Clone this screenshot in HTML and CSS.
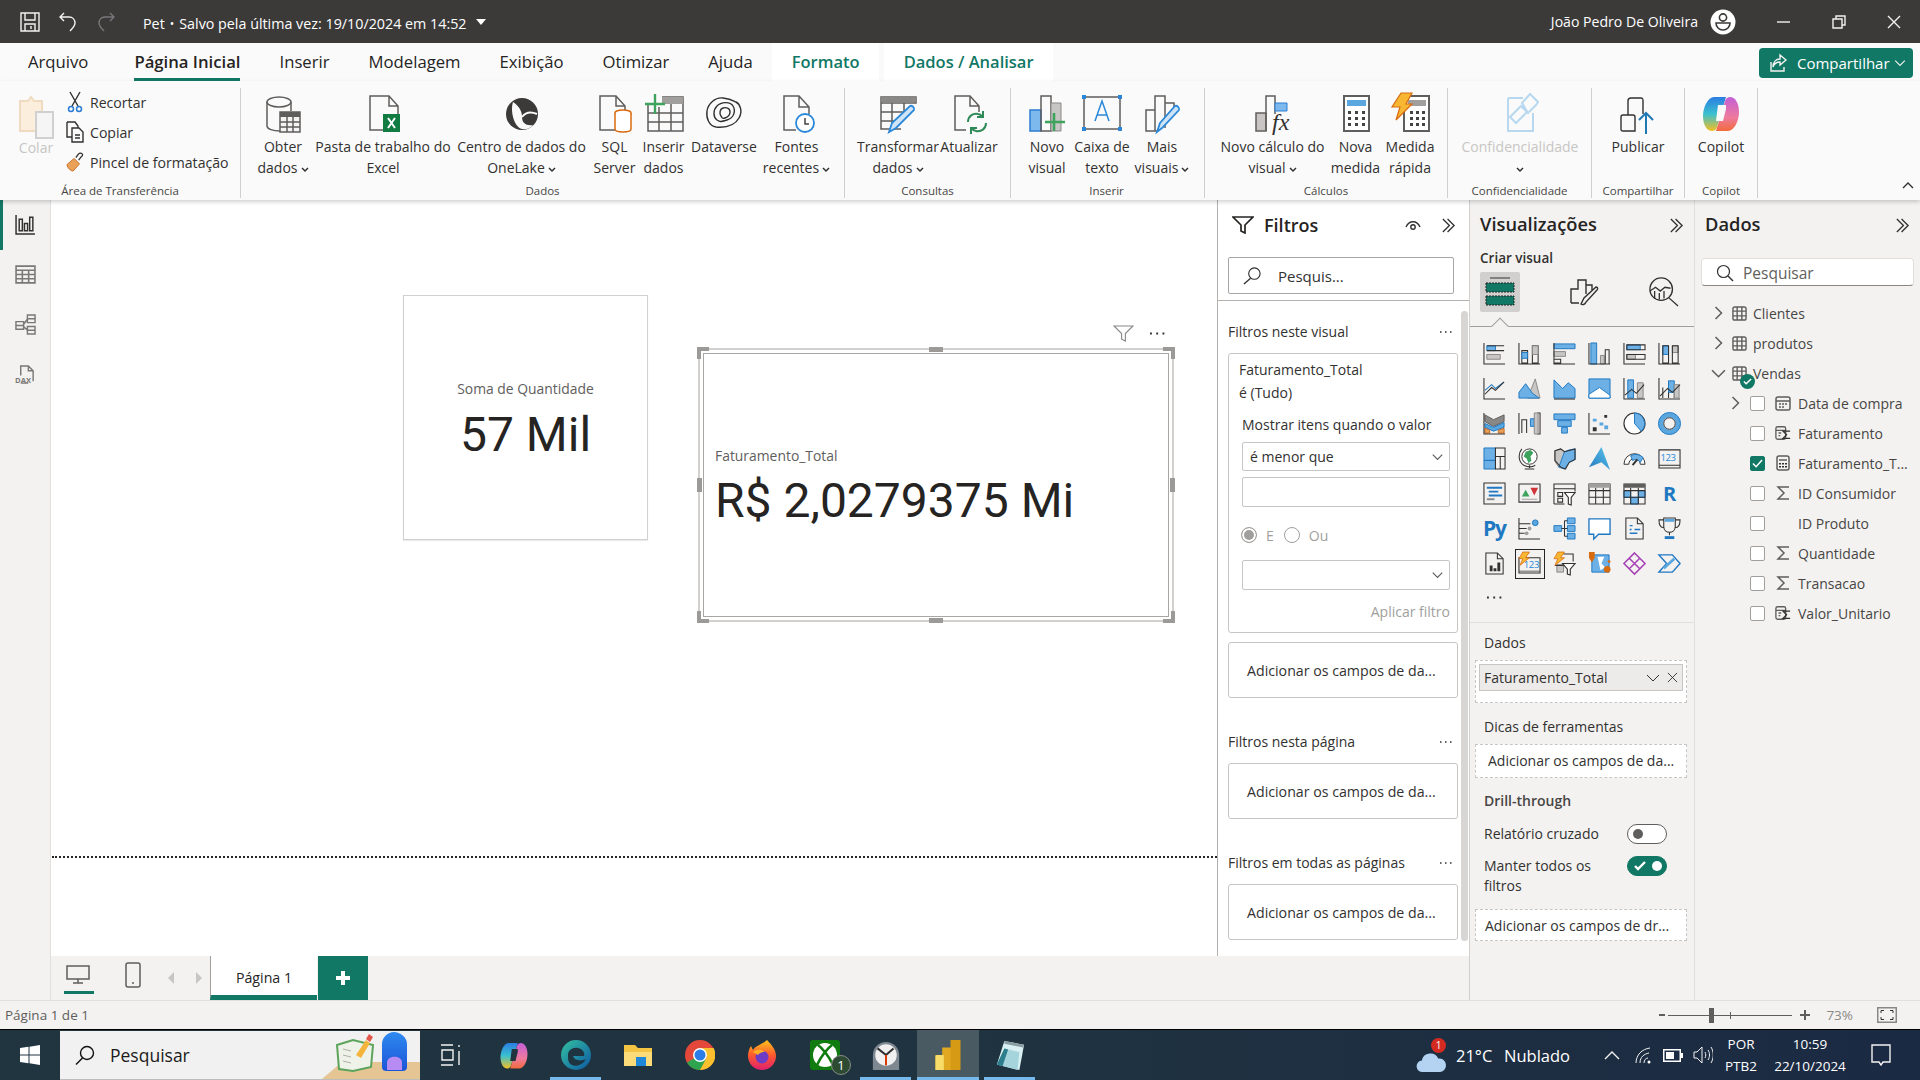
FILE: index.html
```html
<!DOCTYPE html>
<html lang="pt-BR">
<head>
    <meta charset="UTF-8">
    <title>Pet - Power BI Desktop</title>
    <link rel="stylesheet" href="styles.css">
</head>
<body>
    <svg class="defs" width="0" height="0">
        <defs>
            <symbol id="i-double" viewBox="0 0 16 16"><path class="ld" d="M2 1l7 7-7 7M7 1l7 7-7 7"/></symbol>
            <symbol id="i-right" viewBox="0 0 10 14"><path class="lm" d="M2 1l6 6-6 6"/></symbol>
            <symbol id="i-down" viewBox="0 0 14 10"><path class="lm" d="M1 2l6 6 6-6"/></symbol>
            <symbol id="i-more" viewBox="0 0 14 4"><path class="dots" d="M1 2h1.5M6 2h1.5M11 2h1.5"/></symbol>
            <symbol id="i-table" viewBox="0 0 16 16"><rect class="lm" x="1" y="1" width="14" height="14" rx="2"/><path class="lm" d="M1 5.5h14M1 10.5h14M5.5 1v14M10.5 1v14"/></symbol>
            <symbol id="i-sigma" viewBox="0 0 16 16"><path class="lm" d="M14 2H3l6 6-6 6h11"/></symbol>
            <symbol id="i-calc-sum" viewBox="0 0 18 16"><rect class="lm" x="1" y="1" width="11" height="14" rx="2"/><path class="lm" d="M1 5h11M4 8h3M4 11h2"/><path class="ld" d="M17 6H9l4 4-4 4h8" fill="#f3f2f1"/></symbol>
            <symbol id="i-caret" viewBox="0 0 8 6"><path class="car" d="M1 1l3 3 3-3"/></symbol>
        </defs>
    </svg>

    <header class="titlebar">
        <div class="title-left">
            <svg class="t-ic" viewBox="0 0 20 20"><path class="lw" d="M1 1h18v18H1zM5 1v7h10V1M5 19v-7h10v7M11 14v3"/></svg>
            <svg class="t-ic undo" viewBox="0 0 20 20"><path class="lw" d="M6 1L2 5l4 4M2 5h9c4 0 6 3 6 6s-2 5-5 8"/></svg>
            <svg class="t-ic redo" viewBox="0 0 20 20"><path class="lw dim" d="M14 1l4 4-4 4M18 5H9C5 5 3 8 3 11s2 5 5 8"/></svg>
            <span class="doc-name">Pet</span>
            <span class="doc-sep">•</span>
            <span class="doc-save">Salvo pela última vez: 19/10/2024 em 14:52</span>
            <span class="doc-arrow"></span>
        </div>
        <div class="title-right">
            <span class="user">João Pedro De Oliveira</span>
            <svg class="avatar" viewBox="0 0 26 26"><circle cx="13" cy="13" r="12.5" fill="#fff"/><circle cx="13" cy="8.5" r="3.6" fill="none" stroke="#3b3a39" stroke-width="1.6"/><path d="M6 14h14c0 4-3 7-7 7s-7-3-7-7z" fill="none" stroke="#3b3a39" stroke-width="1.6"/></svg>
            <svg class="win-btn" viewBox="0 0 14 14"><path class="lw" d="M0 7h13"/></svg>
            <svg class="win-btn" viewBox="0 0 14 14"><path class="lw" d="M1 4h9v9H1zM4 4V1h9v9h-3"/></svg>
            <svg class="win-btn" viewBox="0 0 14 14"><path class="lw" d="M1 1l12 12M13 1L1 13"/></svg>
        </div>
    </header>

    <nav class="tabs">
        <span class="tab first">Arquivo</span>
        <span class="tab active"><b>Página Inicial</b></span>
        <span class="tab">Inserir</span>
        <span class="tab">Modelagem</span>
        <span class="tab">Exibição</span>
        <span class="tab">Otimizar</span>
        <span class="tab">Ajuda</span>
        <span class="tab context">Formato</span>
        <span class="tab context">Dados / Analisar</span>
        <button class="share">
            <svg class="share-ic" viewBox="0 0 20 20"><path class="lw" d="M3 9v9h13v-4"/><path class="lw" d="M12 2l6 5-6 5V9C8 9 6 11 5 14c0-5 3-8 7-8z"/></svg>
            Compartilhar
            <svg class="share-caret" viewBox="0 0 14 10"><path class="lw" d="M1 2l6 6 6-6"/></svg>
        </button>
    </nav>

    <section class="ribbon">
        <div class="group g-clip">
            <div class="clip-row">
                <div class="paste">
                    <svg class="paste-ic" viewBox="0 0 36 38"><path d="M2 5h8l3-4 3 4h8v30H2z" fill="#fbeedd" stroke="#efdcc0" stroke-width="2"/><rect x="18" y="16" width="17" height="26" fill="#f5f5f5" stroke="#d0d0d0" stroke-width="2"/></svg>
                    <span class="paste-label">Colar</span>
                </div>
                <div class="clip-list">
                    <div class="clip-item">
                        <svg class="clip-ic" viewBox="0 0 18 22"><path class="ld" d="M4 1l8 14M14 1L6 15"/><circle cx="5" cy="18" r="2.5" fill="none" stroke="#2b7cd3" stroke-width="1.5"/><circle cx="13" cy="18" r="2.5" fill="none" stroke="#2b7cd3" stroke-width="1.5"/></svg>
                        Recortar
                    </div>
                    <div class="clip-item">
                        <svg class="clip-ic" viewBox="0 0 18 22"><path class="ld" d="M1 1h8l3 4v2M1 1v15h5"/><path class="ld" d="M6 7h7l4 4v10H6zM9 14h5M9 17h5"/></svg>
                        Copiar
                    </div>
                    <div class="clip-item">
                        <svg class="clip-ic" viewBox="0 0 20 22"><path d="M1 14L9 7l6 6-7 8c-3 0-6-3-7-7z" fill="#e8a25a" stroke="#c9661c" stroke-width="1"/><path class="ld" d="M11 6l3-4c1-1 3-1 4 0s0 3-1 3l-3 4"/></svg>
                        Pincel de formatação
                    </div>
                </div>
            </div>
            <div class="group-name">Área de Transferência</div>
        </div>

        <div class="group g-data">
            <div class="rb-row">
                <div class="rb w60">
                    <svg class="rb-ic" viewBox="0 0 40 40"><ellipse class="lm" cx="16" cy="9" rx="12" ry="5"/><path class="lm" d="M4 9v24c0 3 6 5 13 5M28 9v9"/><rect x="17" y="19" width="20" height="20" fill="#f4f4f4" stroke="#605e5c" stroke-width="1.5"/><path d="M17 19h20v5H17z" fill="#605e5c"/><path class="lm" d="M24 24v15M30 24v15M17 29h20M17 34h20"/></svg>
                    <span class="rb-t">Obter<br>dados<svg class="caret"><use href="#i-caret"/></svg></span>
                </div>
                <div class="rb w140">
                    <svg class="rb-ic" viewBox="0 0 40 40"><path class="lm" d="M21 37H7V3h19l9 10v8M26 3v10h9"/><rect x="20" y="21" width="17" height="18" fill="#107c41"/><path d="M25 25l7 10M32 25l-7 10" stroke="#fff" stroke-width="2" fill="none"/></svg>
                    <span class="rb-t">Pasta de trabalho do<br>Excel</span>
                </div>
                <div class="rb w137">
                    <svg class="rb-ic" viewBox="0 0 40 40"><circle cx="20" cy="21" r="16" fill="#3b3a39"/><path d="M11 9c6 4 9 9 9 15s4 9 11 8c-2 3-7 5-11 4C12 34 8 18 11 9z" fill="#fafafa"/><path d="M20 24c3-4 8-6 15-3" fill="none" stroke="#fafafa" stroke-width="2"/></svg>
                    <span class="rb-t">Centro de dados do<br>OneLake<svg class="caret"><use href="#i-caret"/></svg></span>
                </div>
                <div class="rb w49">
                    <svg class="rb-ic" viewBox="0 0 40 40"><path class="lm" d="M20 37H5V3h16l9 10v5M21 3v10h9"/><ellipse cx="28" cy="20" rx="8" ry="3" fill="#fff" stroke="#d86b10" stroke-width="1.5"/><path d="M20 20v16c0 2 4 3 8 3s8-1 8-3V20" fill="#fff" stroke="#d86b10" stroke-width="1.5"/></svg>
                    <span class="rb-t">SQL<br>Server</span>
                </div>
                <div class="rb w49">
                    <svg class="rb-ic" viewBox="0 0 40 40"><path class="lm" d="M4 10v28h35V4H18M4 20h35M4 29h35M15 14v24M27 4v34"/><path d="M18 4h21v7H18z" fill="#a19f9d"/><path d="M11 1v20M1 11h20" stroke="#3da35d" stroke-width="2.4" fill="none"/></svg>
                    <span class="rb-t">Inserir<br>dados</span>
                </div>
                <div class="rb w72">
                    <svg class="rb-ic" viewBox="0 0 40 40"><path class="ld" d="M12 34C5 33 2 25 3 18S11 4 19 5s9 2 13 4 7 9 3 16-12 10-23 9zM13 27c-4-3-4-10 0-14s13-5 16 0 1 12-6 14-7 2-10 0zM17 23c-2-3-1-7 2-8s7 0 7 4-2 5-5 6-3 0-4-2z"/></svg>
                    <span class="rb-t">Dataverse</span>
                </div>
                <div class="rb w73">
                    <svg class="rb-ic" viewBox="0 0 40 40"><path class="lm" d="M19 37H7V3h15l10 11v7M22 3v11h10"/><circle cx="28" cy="30" r="9" fill="#fff" stroke="#2b88d8" stroke-width="1.8"/><path d="M28 25v6h4" fill="none" stroke="#444" stroke-width="1.5"/></svg>
                    <span class="rb-t">Fontes<br>recentes<svg class="caret"><use href="#i-caret"/></svg></span>
                </div>
            </div>
            <div class="group-name">Dados</div>
        </div>

        <div class="group g-query">
            <div class="rb-row">
                <div class="rb w82">
                    <svg class="rb-ic" viewBox="0 0 40 40"><path class="lm" d="M3 4h35v6H3zM3 10v26h20M3 19h26M3 28h18M14 10v26M26 10v10"/><path d="M3 4h35v5H3z" fill="#8a8886"/><path d="M11 39l3-9 18-17c2-1 5 2 4 4L18 35z" fill="#cfe5f7" stroke="#2b88d8" stroke-width="1.8"/></svg>
                    <span class="rb-t">Transformar<br>dados<svg class="caret"><use href="#i-caret"/></svg></span>
                </div>
                <div class="rb w60">
                    <svg class="rb-ic" viewBox="0 0 40 40"><path class="lm" d="M17 37H6V3h15l9 10v6M21 3v10h9"/><path d="M19 29c0-6 5-9 10-8 2 0 3 1 5 3M34 18v6h-6M37 30c0 6-5 9-10 8-2 0-3-1-5-3M22 41v-6h6" fill="none" stroke="#2e8b57" stroke-width="2"/></svg>
                    <span class="rb-t">Atualizar</span>
                </div>
            </div>
            <div class="group-name">Consultas</div>
        </div>

        <div class="group g-insert">
            <div class="rb-row">
                <div class="rb w52">
                    <svg class="rb-ic" viewBox="0 0 40 40"><rect x="3" y="17" width="11" height="21" fill="#7db9ec" stroke="#2b7cd3" stroke-width="1.5"/><path class="lm" d="M14 38V3h10v35z"/><path d="M24 10h10v28H24z" fill="#c8c6c4" stroke="#8a8886"/><path d="M27 20v18M18 29h20" stroke="#3da35d" stroke-width="2.6" fill="none"/></svg>
                    <span class="rb-t">Novo<br>visual</span>
                </div>
                <div class="rb w58">
                    <svg class="rb-ic" viewBox="0 0 40 40"><rect class="lm" x="2" y="4" width="36" height="32"/><path d="M13 28l7-20 7 20M15 22h10" fill="none" stroke="#2b88d8" stroke-width="1.5"/><path d="M0 2h4v4H0zM36 2h4v4h-4zM0 34h4v4H0zM36 34h4v4h-4z" fill="#2b88d8"/></svg>
                    <span class="rb-t">Caixa de<br>texto</span>
                </div>
                <div class="rb w62">
                    <svg class="rb-ic" viewBox="0 0 40 40"><path class="lm" d="M4 38V17h9v21zM13 38V3h10v32M23 10h9v12M4 38h12"/><path d="M15 39l3-9 15-17c2-1 5 2 4 4L20 35z" fill="#cfe5f7" stroke="#2b88d8" stroke-width="1.8"/></svg>
                    <span class="rb-t">Mais<br>visuais<svg class="caret"><use href="#i-caret"/></svg></span>
                </div>
            </div>
            <div class="group-name">Inserir</div>
        </div>

        <div class="group g-calc">
            <div class="rb-row">
                <div class="rb w111">
                    <svg class="rb-ic" viewBox="0 0 40 40"><path d="M3 20h10v18H3z" fill="#c8c6c4" stroke="#605e5c" stroke-width="1.5"/><path class="lm" d="M13 38V3h9v18"/><path d="M22 10h12v8H22z" fill="#7db9ec" stroke="#2b7cd3"/><text class="fx" x="19" y="37">fx</text></svg>
                    <span class="rb-t">Novo cálculo do<br>visual<svg class="caret"><use href="#i-caret"/></svg></span>
                </div>
                <div class="rb w55">
                    <svg class="rb-ic" viewBox="0 0 40 40"><rect x="8" y="3" width="25" height="35" fill="#fff" stroke="#605e5c" stroke-width="2"/><rect x="11" y="7" width="19" height="6" fill="#5aa7e0"/><path d="M12 18h3v3h-3zM19 18h3v3h-3zM26 18h3v3h-3zM12 24h3v3h-3zM19 24h3v3h-3zM26 24h3v3h-3zM12 30h3v3h-3zM19 30h3v3h-3zM26 30h3v3h-3z" fill="#444"/></svg>
                    <span class="rb-t">Nova<br>medida</span>
                </div>
                <div class="rb w54">
                    <svg class="rb-ic" viewBox="0 0 40 40"><path d="M14 3h25v35H14z" fill="#fff" stroke="#605e5c" stroke-width="2"/><path d="M18 7h18v6H18z" fill="#a19f9d"/><path d="M20 18h3v3h-3zM26 18h3v3h-3zM32 18h3v3h-3zM20 24h3v3h-3zM26 24h3v3h-3zM32 24h3v3h-3zM20 30h3v3h-3zM26 30h3v3h-3zM32 30h3v3h-3z" fill="#444"/><path d="M11 0h11l-6 11h6L6 27l4-13H2z" fill="#f7b733" stroke="#d86b10" stroke-width="1.2"/></svg>
                    <span class="rb-t">Medida<br>rápida</span>
                </div>
            </div>
            <div class="group-name">Cálculos</div>
        </div>

        <div class="group g-conf">
            <div class="rb-row">
                <div class="rb w120 off">
                    <svg class="rb-ic" viewBox="0 0 40 40"><path d="M8 5h15M8 5v33h25V20" fill="none" stroke="#b7d8ef" stroke-width="2"/><path d="M22 10l8-9 8 8-2 3-8 8zM10 24l11-11 6 6-11 11z" fill="none" stroke="#b7d8ef" stroke-width="2"/></svg>
                    <span class="rb-t">Confidencialidade<br><svg class="caret"><use href="#i-caret"/></svg></span>
                </div>
            </div>
            <div class="group-name">Confidencialidade</div>
        </div>

        <div class="group g-share">
            <div class="rb-row">
                <div class="rb w76">
                    <svg class="rb-ic" viewBox="0 0 40 40"><path class="ld" d="M5 38c-2 0-2-1-2-2V24c0-2 1-2 2-2h5V8c0-2 1-3 3-3h10c2 0 2 1 2 3v13M10 22h5c1 0 2 1 2 2v14H5"/><path d="M28 41V20M21 27l7-7 7 7" fill="none" stroke="#2078b4" stroke-width="2"/></svg>
                    <span class="rb-t">Publicar</span>
                </div>
            </div>
            <div class="group-name">Compartilhar</div>
        </div>

        <div class="group g-copilot">
            <div class="rb-row">
                <div class="rb w60">
                    <svg class="rb-ic" viewBox="0 0 40 40"><defs><linearGradient id="cp1" x1="0" y1="0" x2="0" y2="1"><stop offset="0" stop-color="#2a7de1"/><stop offset=".5" stop-color="#3ac0d0"/><stop offset="1" stop-color="#f4c020"/></linearGradient><linearGradient id="cp2" x1="0" y1="0" x2="0" y2="1"><stop offset="0" stop-color="#c35fd6"/><stop offset=".6" stop-color="#ee7a9d"/><stop offset="1" stop-color="#f26b3c"/></linearGradient></defs><path d="M13 4h12l-9 30c-1 3-3 4-5 4-5 0-9-6-9-15C2 14 7 4 13 4z" fill="url(#cp1)"/><path d="M27 38H15l9-30c1-3 3-4 5-4 5 0 9 6 9 15 0 9-5 19-11 19z" fill="url(#cp2)"/><path d="M17 12h8v4l-3 12h-7z" fill="#fafafa"/></svg>
                    <span class="rb-t">Copilot</span>
                </div>
            </div>
            <div class="group-name">Copilot</div>
        </div>
        <svg class="collapse" viewBox="0 0 12 8"><path class="ld" d="M1 7l5-5 5 5"/></svg>
    </section>

    <main class="main">
        <aside class="rail">
            <div class="rail-item current"><svg class="rail-ic" viewBox="0 0 20 20"><path d="M1 1v18h18M4 5h3v11H4zM9 9h3v7H9zM14 3h3v13h-3z" fill="none" stroke="#323130" stroke-width="1.4"/></svg></div>
            <div class="rail-item"><svg class="rail-ic" viewBox="0 0 20 20"><path class="lg" d="M1 2h18v16H1zM1 6h18M1 10h18M1 14h18M7 6v12M13 6v12"/></svg></div>
            <div class="rail-item"><svg class="rail-ic" viewBox="0 0 22 22"><path class="lg" d="M1 8h8v8H1zM1 12h8M13 1h8v8h-8zM13 5h8M13 13h8v8h-8zM13 17h8M9 11l4-6M9 13l4 4"/></svg></div>
            <div class="rail-item"><svg class="rail-ic" viewBox="0 0 22 22"><path class="lg" d="M6 12V2h8l5 5v11M14 2v5h5M6 20h8"/><text class="dax" x="0" y="20">DAX</text></svg></div>
        </aside>

        <div class="center">
            <div class="work">
                <div class="canvas">
                    <div class="visual visual-a">
                        <div class="card-label">Soma de Quantidade</div>
                        <div class="card-value">57 Mil</div>
                    </div>
                    <div class="visual-tools">
                        <svg class="tool-funnel" viewBox="0 0 22 18"><path d="M1 1h20l-8 8v8l-4-2V9z" fill="none" stroke="#8a8886" stroke-width="1.2"/></svg>
                        <svg class="tool-more" viewBox="0 0 14 4"><use href="#i-more"/></svg>
                    </div>
                    <div class="visual visual-b">
                        <div class="frame"></div>
                        <i class="corner c-tl"></i><i class="corner c-tr"></i><i class="corner c-bl"></i><i class="corner c-br"></i>
                        <i class="edge e-t"></i><i class="edge e-b"></i><i class="edge e-l"></i><i class="edge e-r"></i>
                        <div class="card-label">Faturamento_Total</div>
                        <div class="card-value">R$ 2,0279375 Mi</div>
                    </div>
                    <div class="page-line"></div>
                </div>

                <aside class="filters">
                    <div class="pane-head f-head">
                        <svg class="f-funnel" viewBox="0 0 22 18"><path d="M1 1h20l-8 8v8l-4-2V9z" fill="none" stroke="#252423" stroke-width="1.7"/></svg>
                        <span class="f-title">Filtros</span>
                        <svg class="f-eye" viewBox="0 0 16 10"><path class="ld" d="M1 7c3-7 11-7 14 0"/><circle cx="8" cy="7" r="2.2" fill="none" stroke="#323130" stroke-width="1.4"/></svg>
                        <svg class="chev2"><use href="#i-double"/></svg>
                    </div>
                    <div class="f-search">
                        <svg class="f-lens" viewBox="0 0 20 20"><circle cx="12" cy="8" r="6" fill="none" stroke="#323130" stroke-width="1.2"/><path class="ld" d="M8 13l-7 6"/></svg>
                        Pesquis...
                    </div>
                    <div class="f-body">
                        <div class="f-section first-section"><span>Filtros neste visual</span><svg class="f-more"><use href="#i-more"/></svg></div>
                        <div class="f-card big">
                            <div class="f-line">Faturamento_Total</div>
                            <div class="f-line">é (Tudo)</div>
                            <div class="f-show">Mostrar itens quando o valor</div>
                            <div class="f-select">é menor que<svg class="sel-chev"><use href="#i-down"/></svg></div>
                            <div class="f-input"></div>
                            <div class="f-radios">
                                <span class="radio on"></span><span class="r-text">E</span>
                                <span class="radio"></span><span class="r-text">Ou</span>
                            </div>
                            <div class="f-select second"><svg class="sel-chev"><use href="#i-down"/></svg></div>
                            <div class="f-apply">Aplicar filtro</div>
                        </div>
                        <div class="f-card add first-add">Adicionar os campos de da...</div>
                        <div class="f-section"><span>Filtros nesta página</span><svg class="f-more"><use href="#i-more"/></svg></div>
                        <div class="f-card add">Adicionar os campos de da...</div>
                        <div class="f-section"><span>Filtros em todas as páginas</span><svg class="f-more"><use href="#i-more"/></svg></div>
                        <div class="f-card add">Adicionar os campos de da...</div>
                    </div>
                    <div class="f-scroll"></div>
                </aside>
            </div>

            <div class="strip">
                <div class="view-btn">
                    <svg class="desk" viewBox="0 0 24 19"><path class="lm" d="M1 1h22v13H1zM12 14v4M7 18h10"/></svg>
                </div>
                <svg class="phone" viewBox="0 0 16 26"><rect class="lm" x="1" y="1" width="14" height="24" rx="2"/><path class="lm" d="M7 21h2"/></svg>
                <span class="page-arrow left"></span>
                <span class="page-arrow right"></span>
                <div class="page-tab">Página 1</div>
                <div class="page-add"></div>
            </div>
        </div>

        <aside class="viz">
            <div class="pane-head">
                <span class="pane-title">Visualizações</span>
                <svg class="chev2"><use href="#i-double"/></svg>
            </div>
            <div class="viz-sub">Criar visual</div>
            <div class="viz-tabs">
                <div class="viz-tab on">
                    <svg viewBox="0 0 30 30" class="vt-ic"><path d="M5 1h20" stroke="#323130" fill="none"/><rect x="1" y="6" width="28" height="9" fill="#117865" stroke="#252423" stroke-dasharray="2 1"/><rect x="1" y="19" width="28" height="9" fill="#117865" stroke="#252423" stroke-dasharray="2 1"/></svg>
                </div>
                <svg viewBox="0 0 30 30" class="vt-ic brush"><path class="ld" d="M2 26V12h7V3h8v14M17 8h6v5M2 26h8"/><path class="ld" d="M12 27l3-6 12-11c2 0 2 2 1 3L17 25c-1 3-4 3-5 2z"/></svg>
                <svg viewBox="0 0 32 32" class="vt-ic lens"><circle class="ld" cx="13" cy="13" r="12"/><path class="ld" d="M21 22l10 9M1 15l6-4 5 4 5-4 6 1M6 15v8M11 17v7M16 15v8"/></svg>
            </div>
            <div class="viz-grid">
                <svg class="vi" viewBox="0 0 24 24"><path class="bx" d="M4 4h9v5H4z"/><path class="gx" d="M4 13h14v5H4z"/><path class="ax" d="M1 1v22h22M4 9h18M4 4h18"/></svg>
                <svg class="vi" viewBox="0 0 24 24"><path class="ax" d="M1 1v22h22M4 9v13h6V9zM15 4v18h6V4z"/><path class="bx" d="M4 11h6v6H4z"/><path class="gx" d="M15 4h6v9h-6z"/></svg>
                <svg class="vi" viewBox="0 0 24 24"><path class="bx" d="M1 2h22v5H1z"/><path class="gx" d="M1 10h12v5H1z"/><path class="ax" d="M1 1v22h22M1 18h7v4H1z"/></svg>
                <svg class="vi" viewBox="0 0 24 24"><path class="bx" d="M3 1h6v22H3z"/><path class="gx" d="M13 14h4v9h-4z"/><path class="ax" d="M1 1v22h22M18 8h4v15h-4z"/></svg>
                <svg class="vi" viewBox="0 0 24 24"><path class="bx" d="M4 3h14v5H4z"/><path class="gx" d="M4 13h9v5H4z"/><path class="ax" d="M1 1v22h22M4 3h19v5H4zM4 13h19v5H4z"/></svg>
                <svg class="vi" viewBox="0 0 24 24"><path class="bx" d="M5 4h6v9H5z"/><path class="gx" d="M15 4h6v7h-6z"/><path class="ax" d="M1 1v22h22M5 4v18h6V4zM15 4v18h6V4z"/></svg>

                <svg class="vi" viewBox="0 0 24 24"><path class="ax" d="M1 1v22h22"/><path class="bl" d="M2 14l7-6 4 4 8-6"/><path class="ax" d="M2 18l7-7 4 3 9-9"/></svg>
                <svg class="vi" viewBox="0 0 24 24"><path class="gx" d="M10 22L18 2l5 20z"/><path class="bx" d="M1 22v-6l7-9 7 10 7 5z"/></svg>
                <svg class="vi" viewBox="0 0 24 24"><path class="bx" d="M1 3l9 9 6-6 7 6v10H1z"/><path class="ax" d="M1 23h22"/></svg>
                <svg class="vi" viewBox="0 0 24 24"><path class="bx" d="M1 2h22v20H1z"/><path d="M1 22v-4l11-7 11 8v3z" fill="#fff" stroke="#1f78c1"/></svg>
                <svg class="vi" viewBox="0 0 24 24"><path class="bx" d="M5 3h6v19H5z"/><path class="gx" d="M15 6h6v16h-6z"/><path class="ax" d="M1 1v22h22M2 19l7-6 5 4 8-9"/></svg>
                <svg class="vi" viewBox="0 0 24 24"><path class="ax" d="M1 1v22h22M5 11v11M11 4v18M17 8v14"/><path class="bx" d="M11 4h6v12h-6z"/><path class="gx" d="M17 8h5v14h-5z"/><path class="ax" d="M2 20l8-8 5 4 8-8"/></svg>

                <svg class="vi" viewBox="0 0 24 24"><path d="M2 3l9 5 11-5v7l-11 5-9-5z" fill="#8a8886" stroke="#605e5c"/><path d="M2 12l9 4 11-5v5l-11 4-9-4z" fill="#5aa7e0" stroke="#1f78c1"/><path d="M2 17l5 2v3H2zM16 19l6-2v5h-6z" fill="#e8a25a" stroke="#c9661c"/><path class="ax" d="M1 1v22h22"/></svg>
                <svg class="vi" viewBox="0 0 24 24"><path class="ax" d="M1 1v22M4 22V8h5v14M20 1h3v22h-3"/><path class="bx" d="M13 7h4v8h-4z"/><path class="gx" d="M17 1h4v22h-4z"/></svg>
                <svg class="vi" viewBox="0 0 24 24"><path class="bx" d="M1 2h22v6H1zM5 9h14v6H5z"/><path class="bx" d="M9 16h6v6H9z"/></svg>
                <svg class="vi" viewBox="0 0 24 24"><path class="ax" d="M1 1v22h22"/><path d="M5 7h4v3H5zM12 11h4v3h-4z" fill="#5aa7e0"/><path d="M17 3h3v3h-3zM5 16h4v4H5z" fill="#323130"/><path d="M17 14h4v4h-4z" fill="#5aa7e0"/></svg>
                <svg class="vi" viewBox="0 0 24 24"><circle cx="12" cy="12" r="11" fill="#fff" stroke="#323130" stroke-width="1.2"/><path class="bx" d="M12 1a11 11 0 0 1 7 19l-7-8z"/></svg>
                <svg class="vi" viewBox="0 0 24 24"><circle cx="12" cy="12" r="9" fill="none" stroke="#5aa7e0" stroke-width="5"/><circle cx="12" cy="12" r="6" fill="none" stroke="#323130" stroke-width="1"/><circle cx="12" cy="12" r="11.5" fill="none" stroke="#1f78c1" stroke-width="1"/></svg>

                <svg class="vi" viewBox="0 0 24 24"><path class="bx" d="M1 1h12v13H1zM1 14h12v9H1z"/><path class="ax" d="M13 1h10v22H13zM13 10h10M18 10v13"/></svg>
                <svg class="vi" viewBox="0 0 24 24"><circle cx="12" cy="10" r="8" fill="#fff" stroke="#323130"/><path d="M8 5l5-2 3 3-3 4 1 4-3 3-2-5-3-2z" fill="#3da35d"/><path class="ax" d="M4 2c-4 5-4 13 2 17 4 2 9 2 12 0M12 19v3M7 23h10"/></svg>
                <svg class="vi" viewBox="0 0 24 24"><path class="gx" d="M2 4l6-2 4 3v9l-6 7-4-6z"/><path class="bx" d="M12 5l5-2 6-1v11l-6 3-5 7-6-2z"/><path class="ax" d="M2 4l6-2 4 3 11-3v11l-6 3-4 7-5-2-6-7z"/></svg>
                <svg class="vi" viewBox="0 0 24 24"><defs><linearGradient id="az" x1="0" y1="1" x2="1" y2="0"><stop offset="0" stop-color="#1f78c1"/><stop offset="1" stop-color="#5fc5ea"/></linearGradient></defs><path d="M14 0l9 24-9-8L1 21z" fill="url(#az)"/></svg>
                <svg class="vi" viewBox="0 0 24 24"><path d="M1 18a11 11 0 0 1 22 0h-5a6 6 0 0 0-12 0z" fill="#fff" stroke="#323130"/><path class="bx" d="M8 9a11 11 0 0 1 13 2l-3 5a6 6 0 0 0-8-2z"/><path d="M10 19l5-6" stroke="#323130" stroke-width="2"/></svg>
                <svg class="vi" viewBox="0 0 24 24"><path class="ax" d="M1 3h22v19H1zM1 19h22"/><text class="n123" x="2.5" y="15">123</text></svg>

                <svg class="vi" viewBox="0 0 24 24"><path class="ax" d="M1 1h22v22H1z"/><path d="M4 6h16M6 10h10M6 14h14" stroke="#1f78c1" stroke-width="2" fill="none"/><path d="M4 18h8" stroke="#8a8886" stroke-width="2"/></svg>
                <svg class="vi" viewBox="0 0 24 24"><path class="ax" d="M1 2h22v19H1z"/><path d="M4 18h16" stroke="#a19f9d"/><path d="M4 15l4-7 4 7z" fill="#3da35d"/><path d="M13 6h8l-4 8z" fill="#d13438"/></svg>
                <svg class="vi" viewBox="0 0 24 24"><path class="ax" d="M1 23V2h22v8M1 7h22M5 11h5v4H5zM5 17h5v4H5zM1 23h11"/><path d="M12 11h11l-4 5v8l-3-1v-7z" fill="#fff" stroke="#323130" stroke-width="1.2"/></svg>
                <svg class="vi" viewBox="0 0 24 24"><path class="ax" d="M1 2h22v21H1zM1 9h22M1 16h22M8 6v17M16 6v17"/><path d="M1 2h22v4H1z" fill="#a19f9d"/></svg>
                <svg class="vi" viewBox="0 0 24 24"><path class="bx" d="M1 9h7v7H1zM8 16h8v7H8zM16 9h7v7h-7z"/><path class="ax" d="M1 2h22v21H1zM1 9h22M1 16h22M8 6v17M16 6v17"/><path d="M1 2h22v4H1z" fill="#605e5c"/></svg>
                <span class="vi-text r">R</span>

                <span class="vi-text py">Py</span>
                <svg class="vi" viewBox="0 0 24 24"><path class="ax" d="M1 1v22h22M1 7h12M1 12h8M1 17h6"/><circle cx="18" cy="6" r="3" fill="#5aa7e0" stroke="#1f78c1"/><circle cx="12" cy="12" r="2" fill="#a19f9d"/><circle cx="9" cy="17" r="2" fill="#a19f9d"/></svg>
                <svg class="vi" viewBox="0 0 24 24"><path class="bx" d="M1 9h8v6H1zM15 1h8v6h-8zM15 9h8v6h-8zM15 17h8v6h-8z"/><path class="ax" d="M9 12h6M12 4v16M12 4h3M12 20h3"/></svg>
                <svg class="vi" viewBox="0 0 24 24"><path d="M1 2h22v16H11l-5 5v-5H1z" fill="#fff" stroke="#1f78c1" stroke-width="1.4"/></svg>
                <svg class="vi" viewBox="0 0 24 24"><path class="ax" d="M3 1h12l6 6v16H3zM15 1v6h6"/><path d="M7 9h3M7 13h2M12 13h6M7 17h8" stroke="#1f78c1" stroke-width="1.4" fill="none"/></svg>
                <svg class="vi" viewBox="0 0 24 24"><path class="ax" d="M6 1h12v9c0 4-3 6-6 6s-6-2-6-6zM6 3H1c0 5 2 8 5 8M18 3h5c0 5-2 8-5 8M12 16v3"/><path d="M7 2h10v3H7z" fill="#5aa7e0"/><path d="M7 20h10v3H7z" fill="#1f78c1"/></svg>

                <svg class="vi" viewBox="0 0 24 24"><path class="ax" d="M3 1h12l6 6v16H3zM15 1v6h6"/><path d="M7 14h3v6H7zM11 17h3v3h-3zM15 11h3v9h-3z" fill="#323130"/></svg>
                <div class="vi-sel"><svg class="vi" viewBox="0 0 24 24"><path class="ax" d="M1 6h22v16H1z"/><path d="M1 20h22" stroke="#605e5c"/><text class="n123" x="6" y="17">123</text><path d="M5 0h7L8 6h4L2 14l3-7H1z" fill="#f7b733" stroke="#d86b10" stroke-width=".8"/></svg></div>
                <svg class="vi" viewBox="0 0 24 24"><path class="gx" d="M4 13h7v8H4z"/><path class="ax" d="M11 2h10v8M2 14h9"/><path d="M10 12h13l-5 6v6l-3-1v-5z" fill="#fff" stroke="#323130" stroke-width="1.2"/><path d="M5 0h7L8 6h4L2 14l3-7H1z" fill="#f7b733" stroke="#d86b10" stroke-width=".8"/></svg>
                <svg class="vi" viewBox="0 0 24 24"><path class="bx" d="M4 3h18v18H4z"/><path d="M10 5l7 0-3 7 4 4-5 3z" fill="#fff"/><path d="M1 0h6v6l-3 5-3-5z" fill="#d86b10"/><circle cx="20" cy="18" r="3.5" fill="#d86b10"/><circle cx="22" cy="10" r="1.5" fill="#d86b10"/></svg>
                <svg class="vi" viewBox="0 0 24 24"><path d="M12 1l11 11-11 11L1 12zM6 6l12 12M18 6L6 18" fill="none" stroke="#a741b5" stroke-width="1.6"/></svg>
                <svg class="vi" viewBox="0 0 24 24"><path d="M1 3h14l8 9-8 9H1l8-9z" fill="none" stroke="#1f78c1" stroke-width="1.5"/><path d="M6 17L17 7" stroke="#5aa7e0" stroke-width="3"/></svg>

                <svg class="vi-more"><use href="#i-more"/></svg>
            </div>

            <div class="wells">
                <div class="well-title">Dados</div>
                <div class="drop d1">
                    <div class="pill">
                        <span>Faturamento_Total</span>
                        <svg class="pill-chev" viewBox="0 0 14 10"><path class="ld thin" d="M1 2l6 6 6-6"/></svg>
                        <svg class="pill-x" viewBox="0 0 12 12"><path class="ld thin" d="M1 1l10 10M11 1L1 11"/></svg>
                    </div>
                </div>
                <div class="well-title t2">Dicas de ferramentas</div>
                <div class="drop d2">Adicionar os campos de da...</div>
                <div class="well-title t3"><b>Drill-through</b></div>
                <div class="opt o1">
                    <span>Relatório cruzado</span>
                    <span class="toggle"></span>
                </div>
                <div class="opt o2">
                    <span>Manter todos os filtros</span>
                    <span class="toggle on"><svg class="tg-check" viewBox="0 0 12 10"><path d="M1 5l3 3 7-7" fill="none" stroke="#fff" stroke-width="2.4"/></svg></span>
                </div>
                <div class="drop d3">Adicionar os campos de dr...</div>
            </div>
        </aside>

        <aside class="data">
            <div class="pane-head">
                <span class="pane-title">Dados</span>
                <svg class="chev2"><use href="#i-double"/></svg>
            </div>
            <div class="d-search">
                <svg class="d-lens" viewBox="0 0 18 18"><circle cx="7.5" cy="7.5" r="6" fill="none" stroke="#323130" stroke-width="1.2"/><path class="ld" d="M12 12l5 5"/></svg>
                Pesquisar
            </div>
            <ul class="tree">
                <li class="node"><svg class="arrow"><use href="#i-right"/></svg><svg class="n-ic"><use href="#i-table"/></svg><span>Clientes</span></li>
                <li class="node"><svg class="arrow"><use href="#i-right"/></svg><svg class="n-ic"><use href="#i-table"/></svg><span>produtos</span></li>
                <li class="node"><svg class="arrow open"><use href="#i-down"/></svg><span class="n-wrap"><svg class="n-ic"><use href="#i-table"/></svg><span class="badge"><svg viewBox="0 0 10 8"><path d="M1 4l2.500 2.500L9 1" fill="none" stroke="#fff" stroke-width="1.6"/></svg></span></span><span>Vendas</span></li>
                <li class="leaf"><svg class="arrow"><use href="#i-right"/></svg><span class="chk"></span><svg class="l-ic" viewBox="0 0 16 16"><rect class="lm" x="1" y="2" width="14" height="13" rx="2"/><path class="lm" d="M1 6h14M4 9h2M7 9h2M10 9h2M4 12h2M7 12h2"/></svg><span>Data de compra</span></li>
                <li class="leaf"><span class="arrow-gap"></span><span class="chk"></span><svg class="l-ic"><use href="#i-calc-sum"/></svg><span>Faturamento</span></li>
                <li class="leaf"><span class="arrow-gap"></span><span class="chk on"><svg viewBox="0 0 12 10"><path d="M1 5l3.500 3.500L11 1" fill="none" stroke="#fff" stroke-width="1.6"/></svg></span><svg class="l-ic" viewBox="0 0 16 16"><rect class="lm" x="2" y="1" width="12" height="14" rx="2"/><path class="lm" d="M4 5h8"/><path class="dk" d="M4 8h2v1.500H4zM7 8h2v1.500H7zM10 8h2v1.500h-2zM4 11h2v1.500H4zM7 11h2v1.500H7zM10 11h2v1.500h-2z"/></svg><span>Faturamento_T...</span></li>
                <li class="leaf"><span class="arrow-gap"></span><span class="chk"></span><svg class="l-ic"><use href="#i-sigma"/></svg><span>ID Consumidor</span></li>
                <li class="leaf"><span class="arrow-gap"></span><span class="chk"></span><span class="l-ic"></span><span>ID Produto</span></li>
                <li class="leaf"><span class="arrow-gap"></span><span class="chk"></span><svg class="l-ic"><use href="#i-sigma"/></svg><span>Quantidade</span></li>
                <li class="leaf"><span class="arrow-gap"></span><span class="chk"></span><svg class="l-ic"><use href="#i-sigma"/></svg><span>Transacao</span></li>
                <li class="leaf"><span class="arrow-gap"></span><span class="chk"></span><svg class="l-ic"><use href="#i-calc-sum"/></svg><span>Valor_Unitario</span></li>
            </ul>
        </aside>
    </main>

    <footer class="status">
        <span class="status-page">Página 1 de 1</span>
        <div class="zoom">
            <span class="z-minus"></span>
            <div class="z-track"><i class="z-tick"></i><i class="z-thumb"></i></div>
            <span class="z-plus"></span>
            <span class="z-val">73%</span>
            <svg class="z-fit" viewBox="0 0 20 16"><rect x=".75" y=".75" width="18.500" height="14.500" fill="none" stroke="#8a8886" stroke-width="1.500"/><path class="ld thin" d="M4 6V3.500h3M13 3.500h3V6M16 10v2.500h-3M7 12.500H4V10"/></svg>
        </div>
    </footer>

    <div class="taskbar">
        <svg class="start" viewBox="0 0 20 20"><path d="M0 3l8.500-1.200V9.500H0zM9.500 1.700L20 0v9.500H9.500zM0 10.500h8.500v7.700L0 17zM9.500 10.500H20V20L9.500 18.300z" fill="#fff"/></svg>
        <div class="task-search">
            <svg class="ts-lens" viewBox="0 0 20 20"><circle cx="12" cy="8" r="6.500" fill="none" stroke="#111" stroke-width="1.400"/><path d="M7.500 13L1 19.500" stroke="#111" stroke-width="1.400"/></svg>
            <span>Pesquisar</span>
            <svg class="ts-art" viewBox="0 0 98 49"><defs><linearGradient id="bag" x1="0" y1="0" x2="0" y2="1"><stop offset="0" stop-color="#2f8af0"/><stop offset="1" stop-color="#1b55d8"/></linearGradient></defs><path d="M0 49l20-17h78v17z" fill="#e6c594"/><path d="M15 15l16-5 20 5-2 22-18 4-14-2z" fill="#eef2e8" stroke="#5ca45c" stroke-width="2"/><path d="M21 19l8 2M21 25l8 2M21 31l8 2" stroke="#a9b3a2" fill="none"/><path d="M34 25l10-15 4 3-9 15z" fill="#f5b43c"/><path d="M44 9l3-5 4 3-3 5z" fill="#e2574c"/><path d="M60 14c0-7 6-12 12-12s13 5 13 12v23c0 3-2 4-5 4H65c-3 0-5-1-5-4z" fill="url(#bag)"/><path d="M65 32c1-7 14-7 15 0v8H65z" fill="#b78cf2"/></svg>
        </div>
        <svg class="task-view" viewBox="0 0 20 22"><path class="lw" d="M1 1h12M1 21h12M2 6h11v10H2zM19 1v2M19 7v14"/></svg>
        <div class="task-item">
            <svg class="ti" viewBox="0 0 40 40"><path d="M13 4h12l-9 30c-1 3-3 4-5 4-5 0-9-6-9-15C2 14 7 4 13 4z" fill="url(#cp1)"/><path d="M27 38H15l9-30c1-3 3-4 5-4 5 0 9 6 9 15 0 9-5 19-11 19z" fill="url(#cp2)"/><path d="M17 12h8v4l-3 12h-7z" fill="#21333f"/></svg>
        </div>
        <div class="task-item run">
            <svg class="ti" viewBox="0 0 30 30"><defs><linearGradient id="edg" x1="0" y1="0" x2="1" y2="1"><stop offset="0" stop-color="#35c1a0"/><stop offset="1" stop-color="#0c59a4"/></linearGradient></defs><circle cx="15" cy="15" r="15" fill="url(#edg)"/><path d="M7 15c0-5 5-8 10-7s7 5 6 8H12c1 4 7 6 13 3-3 6-10 8-14 6S7 19 7 15z" fill="#1e3440"/></svg>
        </div>
        <div class="task-item">
            <svg class="ti" viewBox="0 0 30 30"><path d="M1 5h11l3 3h14v18H1z" fill="#f4c542"/><path d="M1 12h28v14H1z" fill="#fbdc78"/><path d="M13 17h10v9H13z" fill="#1f88d9"/></svg>
        </div>
        <div class="task-item">
            <svg class="ti" viewBox="0 0 30 30"><circle cx="15" cy="15" r="15" fill="#e3483a"/><path d="M15 15L2 22.500A15 15 0 0 0 15 30l7-10z" fill="#2fa44f"/><path d="M15 8h13.600A15 15 0 0 1 15 30l7-13z" fill="#fbc02d"/><circle cx="15" cy="15" r="7" fill="#fff"/><circle cx="15" cy="15" r="5.500" fill="#2b7de9"/></svg>
        </div>
        <div class="task-item">
            <svg class="ti" viewBox="0 0 30 30"><defs><linearGradient id="ffx" x1="0" y1="0" x2="0" y2="1"><stop offset="0" stop-color="#ffc21c"/><stop offset=".5" stop-color="#ff5a2d"/><stop offset="1" stop-color="#e0206e"/></linearGradient></defs><path d="M20 0c5 5 9 10 9 16a14 14 0 0 1-28 0c0-4 1-7 3-10l2 4c2-4 8-5 14-10z" fill="url(#ffx)"/><circle cx="15" cy="17" r="6.500" fill="#6e3cc4"/><path d="M6 12c4-3 9-3 12 0-3 0-6 1-7 3z" fill="#ffb020"/></svg>
        </div>
        <div class="task-item">
            <span class="xbox"><svg viewBox="0 0 30 30"><circle cx="15" cy="15" r="12" fill="#fff"/><path d="M8 5c4 3 11 11 15 20M22 5C18 8 11 16 7 25" fill="none" stroke="#107c10" stroke-width="2.600"/></svg></span>
            <span class="x-count">1</span>
        </div>
        <div class="task-item run">
            <svg class="ti" viewBox="0 0 30 32"><path d="M1 32V16a14 14 0 0 1 28 0v16z" fill="#7e8891"/><circle cx="15" cy="16" r="11.500" fill="#f0f0f0"/><path d="M6 9l9 7 8-7" fill="none" stroke="#2e2e2e" stroke-width="2.200"/><path d="M15 16v11" stroke="#d83b01" stroke-width="2.200"/></svg>
        </div>
        <div class="task-item run active">
            <svg class="ti" viewBox="0 0 30 36"><rect x="0" y="18" width="13" height="18" fill="#f2c811"/><path d="M8 9h12v27H8z" fill="#e0a820"/><path d="M18 0h12v36H18z" fill="#d69a15"/><path d="M0 20c0-1 1-2 2-2h8v18H0z" fill="#f8dc6a"/></svg>
        </div>
        <div class="task-item run">
            <svg class="ti" viewBox="0 0 30 32"><path d="M9 1l21 4-5 27-24-6z" fill="#d8f0f2"/><path d="M1 26L9 9l16 4-2 19z" fill="#a5d4dc"/><path d="M9 1l21 4-1 3-20-4z" fill="#8a9da3"/><path d="M1 26L9 9l4 1-6 18z" fill="#2e7d8c"/></svg>
        </div>

        <div class="tray">
            <div class="weather">
                <svg class="cloud" viewBox="0 0 32 26"><path d="M7 25a6 6 0 0 1-1-12 9 9 0 0 1 17-2 7 7 0 0 1 2 14z" fill="#b4d3f2"/></svg>
                <span class="w-badge">1</span>
            </div>
            <span class="w-temp">21°C</span>
            <span class="w-desc">Nublado</span>
            <svg class="tr-chev" viewBox="0 0 16 10"><path class="lw" d="M1 9l7-7 7 7"/></svg>
            <svg class="tr-wifi" viewBox="0 0 16 18"><path class="lw thin" d="M1 17c0-8 6-14 14-15M5 17c0-6 4-9 9-10M9 17c0-3 2-5 4-5"/><circle cx="14" cy="16" r="1.500" fill="#fff"/></svg>
            <svg class="tr-batt" viewBox="0 0 20 13"><rect x=".75" y=".75" width="16.500" height="11.500" fill="none" stroke="#fff" stroke-width="1.500"/><path d="M3 3h8v7H3zM18 4h2v5h-2z" fill="#fff"/></svg>
            <svg class="tr-vol" viewBox="0 0 20 18"><path class="lw thin" d="M1 6h3l5-5v16l-5-5H1zM12 6c1 2 1 4 0 6M15 4c2 3 2 7 0 10M18 1c3 5 3 11 0 16"/></svg>
            <div class="lang"><span>POR</span><span>PTB2</span></div>
            <div class="clock"><span>10:59</span><span>22/10/2024</span></div>
            <svg class="notif" viewBox="0 0 20 22"><path class="lw" d="M1 1h18v17h-7l-2 3-2-3H1z"/></svg>
        </div>
    </div>
</body>
</html>
```
FILE: styles.css
```css
* {
    box-sizing: border-box;
}

html, body {
    margin: 0;
    width: 1920px;
    height: 1080px;
    overflow: hidden;
}

body {
    font-family: "Open Sans", Roboto, sans-serif;
    font-size: 14px;
    color: #323130;
    background: #f3f2f1;
}

.defs {
    position: absolute;
}

svg {
    display: block;
    flex: none;
}

/* svg stroke helpers */
.lw { fill: none; stroke: #f3f2f1; stroke-width: 1.4; }
.lw.dim { stroke: #77767a; }
.lw.thin { stroke-width: 1; }
.ld { fill: none; stroke: #323130; stroke-width: 1.4; }
.ld.thin { stroke-width: 1; }
.lm { fill: none; stroke: #605e5c; stroke-width: 1.5; }
.lg { fill: none; stroke: #7a7876; stroke-width: 1.5; }
.dk { fill: #323130; }
.dots { fill: none; stroke: #323130; stroke-width: 1.6; }
.car { fill: none; stroke: #323130; stroke-width: 1.5; }
.ax { fill: none; stroke: #323130; stroke-width: 1.1; }
.bx { fill: #6cb0e6; stroke: #1f78c1; stroke-width: 1; }
.gx { fill: #c8c6c4; stroke: #8a8886; stroke-width: 1; }
.bl { fill: none; stroke: #1f78c1; stroke-width: 1.1; }
.n123 { font-size: 10px; fill: #1f88d9; letter-spacing: -.4px; }
.fx { font-family: "Liberation Serif", serif; font-style: italic; font-size: 24px; fill: #323130; }
.dax { font-size: 8px; font-weight: 700; fill: #7a7876; }

/* title bar */
.titlebar {
    height: 43px;
    background: #3b3a39;
    color: #fff;
    display: flex;
    justify-content: space-between;
    align-items: center;
}

.title-left,
.title-right {
    display: flex;
    align-items: center;
}

.title-left {
    padding-left: 20px;
}

.t-ic {
    width: 20px;
    height: 20px;
}

.t-ic.undo {
    margin-left: 18px;
}

.t-ic.redo {
    margin-left: 18px;
}

.doc-name {
    margin-left: 27px;
    font-size: 14.300px;
    padding-top: 3px;
}

.doc-sep {
    margin: 0 5px;
    font-size: 12px;
    padding-top: 3px;
}

.doc-save {
    font-size: 14.300px;
    padding-top: 3px;
}

.doc-arrow {
    margin: 1px 0 0 9px;
    border-top: 6px solid #fff;
    border-left: 5px solid transparent;
    border-right: 5px solid transparent;
}

.user {
    font-size: 14.100px;
    margin-left: -3px;
}

.avatar {
    width: 26px;
    height: 26px;
    margin-left: 12px;
}

.win-btn {
    width: 14px;
    height: 14px;
    margin-left: 41px;
}

.title-right {
    padding-right: 19px;
}

/* ribbon tabs */
.tabs {
    height: 38px;
    background: #fafafa;
    display: flex;
    align-items: stretch;
    padding-left: 28px;
    position: relative;
    font-size: 16.700px;
}

.tab {
    padding: 0 19.500px;
    line-height: 38px;
    color: #252423;
}

.tab.first {
    padding: 0 46px 0 0;
}

.tab b {
    font-weight: 600;
}

.tab.active {
    padding: 0;
    margin: 0 19.500px 0 0;
    border-bottom: 3px solid #117865;
}

.tab.context {
    background: #fff;
    color: #117865;
    font-weight: 600;
    font-size: 16.500px;
    margin-right: 5px;
}

.share {
    position: absolute;
    left: 1759px;
    top: 5px;
    width: 154px;
    height: 30px;
    background: #117865;
    color: #fff;
    border: none;
    border-radius: 4px;
    font: inherit;
    font-size: 15px;
    display: flex;
    align-items: center;
    padding: 0 0 0 9px;
}

.share-ic {
    width: 20px;
    height: 20px;
    margin-right: 9px;
}

.share-caret {
    width: 12px;
    height: 8px;
    margin-left: 4px;
}

/* ribbon */
.ribbon {
    height: 119px;
    background: #fafafa;
    display: flex;
    align-items: flex-start;
    position: relative;
    z-index: 2;
    box-shadow: 0 2px 4px rgba(0, 0, 0, .18);
    padding-top: 7px;
}

.group {
    height: 110px;
    border-right: 1px solid #d2d0ce;
    display: flex;
    flex-direction: column;
    justify-content: space-between;
    flex: none;
}

.g-clip { width: 241px; }
.g-data { width: 604px; padding-left: 12px; }
.g-query { width: 166px; padding-left: 12px; }
.g-insert { width: 194px; padding-left: 10px; }
.g-calc { width: 243px; padding-left: 12px; }
.g-conf { width: 144px; padding-left: 12px; }
.g-share { width: 93px; padding-left: 8px; }
.g-copilot { width: 73px; padding-left: 6px; }

.group-name {
    text-align: center;
    font-size: 11.500px;
    line-height: 14px;
    color: #484644;
}

.g-data .group-name,
.g-query .group-name,
.g-insert .group-name,
.g-calc .group-name,
.g-conf .group-name {
    margin-right: 12px;
}

.g-share .group-name { margin-right: 8px; }
.g-copilot .group-name { margin-right: 6px; }

.rb-row {
    display: flex;
    padding-top: 5px;
}

.rb {
    display: flex;
    flex-direction: column;
    align-items: center;
    flex: none;
}

.w49 { width: 49px; }
.w52 { width: 52px; }
.w54 { width: 54px; }
.w55 { width: 55px; }
.w58 { width: 58px; }
.w60 { width: 60px; }
.w62 { width: 62px; }
.w72 { width: 72px; }
.w73 { width: 73px; }
.w76 { width: 76px; }
.w82 { width: 82px; }
.w111 { width: 111px; }
.w120 { width: 120px; }
.w137 { width: 137px; }
.w140 { width: 140px; }

.rb-ic {
    width: 40px;
    height: 40px;
    overflow: visible;
}

.rb-t {
    margin-top: 3px;
    font-size: 14px;
    line-height: 21px;
    text-align: center;
    white-space: nowrap;
    color: #323130;
}

.off .rb-t {
    color: #c8c6c4;
}

.off .car {
    stroke: #a19f9d;
}

.caret {
    display: inline-block;
    width: 8px;
    height: 6px;
    margin-left: 3px;
}

.off .caret {
    margin-left: 0;
}

.clip-row {
    display: flex;
    padding: 8px 0 0 18px;
}

.paste {
    width: 36px;
    display: flex;
    flex-direction: column;
    align-items: center;
}

.paste-ic {
    width: 36px;
    height: 38px;
    overflow: visible;
}

.paste-label {
    margin-top: 3px;
    color: #c8c6c4;
    font-size: 14px;
    line-height: 21px;
}

.clip-list {
    margin: -9px 0 0 12px;
}

.clip-item {
    display: flex;
    align-items: center;
    height: 30px;
    font-size: 14.100px;
    white-space: nowrap;
}

.clip-ic {
    width: 18px;
    height: 22px;
    margin-right: 6px;
}

.collapse {
    position: absolute;
    left: 1902px;
    top: 100px;
    width: 12px;
    height: 8px;
}

/* main area */
.main {
    height: 800px;
    display: flex;
}

.rail {
    width: 51px;
    background: #f3f2f1;
    border-right: 1px solid #e1dfdd;
    flex: none;
}

.rail-item {
    height: 50px;
    display: flex;
    align-items: center;
    justify-content: center;
    padding-bottom: 2px;
}

.rail-item.current {
    border-left: 3px solid #117865;
    padding-right: 3px;
}

.rail-ic {
    width: 21px;
    height: 21px;
    overflow: visible;
}

.center {
    width: 1418px;
    flex: none;
    display: flex;
    flex-direction: column;
}

.work {
    height: 756px;
    display: flex;
}

/* report canvas */
.canvas {
    width: 1167px;
    background: #fff;
    border-right: 1px solid #b3b0ad;
    position: relative;
    flex: none;
}

.visual {
    position: absolute;
    background: #fff;
}

.visual-a {
    left: 352px;
    top: 95px;
    width: 245px;
    height: 245px;
    border: 1px solid #d2d0ce;
    box-shadow: 0 1px 1px rgba(0, 0, 0, .08);
    text-align: center;
    padding-top: 82px;
}

.visual-b {
    left: 652px;
    top: 153px;
    width: 466px;
    height: 264px;
    border: 1px solid #a8a6a4;
    padding: 91px 0 0 11px;
}

.frame {
    position: absolute;
    inset: -6px;
    border: 2px solid #d2d0ce;
}

.card-label {
    font-size: 13.900px;
    color: #605e5c;
    line-height: 22px;
}

.card-value {
    font-family: Roboto, sans-serif;
    font-size: 48px;
    line-height: 58px;
    color: #252423;
    margin-top: 5px;
}

.visual-a .card-value {
    margin-top: 6px;
}

.corner {
    position: absolute;
    width: 12px;
    height: 12px;
    border: 0 solid #9c9a98;
}

.c-tl { left: -7px; top: -7px; border-width: 4px 0 0 4px; }
.c-tr { right: -7px; top: -7px; border-width: 4px 4px 0 0; }
.c-bl { left: -7px; bottom: -7px; border-width: 0 0 4px 4px; }
.c-br { right: -7px; bottom: -7px; border-width: 0 4px 4px 0; }

.edge {
    position: absolute;
    background: #9c9a98;
}

.e-t, .e-b {
    left: calc(50% - 7px);
    width: 14px;
    height: 5px;
}

.e-t { top: -7px; }
.e-b { bottom: -7px; }

.e-l, .e-r {
    top: calc(50% - 7px);
    width: 5px;
    height: 14px;
}

.e-l { left: -7px; }
.e-r { right: -7px; }

.visual-tools {
    position: absolute;
    left: 1062px;
    top: 125px;
    display: flex;
    align-items: center;
}

.tool-funnel {
    width: 21px;
    height: 17px;
}

.tool-more {
    width: 19px;
    height: 5px;
    margin-left: 14px;
}

.page-line {
    position: absolute;
    left: 1px;
    right: 0;
    top: 656px;
    border-top: 2px dotted #252423;
}

/* filters pane */
.filters {
    width: 251px;
    flex: none;
    background: #fff;
    position: relative;
    padding: 0;
}

.pane-head {
    height: 50px;
    display: flex;
    align-items: center;
    justify-content: space-between;
    padding: 0 10px;
}

.f-head {
    justify-content: flex-start;
    padding: 0 13px 0 14px;
}

.f-funnel {
    width: 22px;
    height: 18px;
}

.f-title {
    font-size: 18px;
    font-weight: 600;
    margin-left: 10px;
    color: #252423;
    flex: 1;
}

.f-eye {
    width: 16px;
    height: 10px;
    margin-right: 20px;
}

.chev2 {
    width: 15px;
    height: 15px;
}

.f-search {
    margin: 7px 15px 0 10px;
    height: 37px;
    border: 1px solid #a8a6a4;
    border-radius: 2px;
    display: flex;
    align-items: center;
    padding-left: 14px;
    font-size: 15px;
}

.f-lens {
    width: 19px;
    height: 19px;
    margin-right: 16px;
}

.f-body {
    margin-top: 6px;
    border-top: 1px solid #b3b0ad;
    padding: 0 10px;
}

.f-section {
    height: 20px;
    margin-top: 33px;
    font-size: 14px;
    line-height: 20px;
    display: flex;
    justify-content: space-between;
    align-items: center;
    padding: 2px 6px 0 0;
}

.first-section {
    margin-top: 21px;
    padding-top: 0;
}

.f-more {
    width: 14px;
    height: 4px;
}

.f-card {
    width: 230px;
    margin-top: 12px;
    border: 1px solid #c8c6c4;
    border-radius: 3px;
    background: #fff;
}

.f-card.big {
    margin-top: 11px;
    height: 280px;
    padding: 4px 7px 0 10px;
}

.f-line {
    font-size: 14px;
    line-height: 24px;
}

.f-line + .f-line {
    margin-top: -1px;
}

.f-show {
    font-size: 14px;
    line-height: 20px;
    margin: 10px 0 0 3px;
}

.f-select,
.f-input {
    margin: 7px 0 0 3px;
    width: 208px;
    height: 29px;
    border: 1px solid #c8c6c4;
    border-radius: 2px;
    font-size: 14px;
    line-height: 27px;
    padding-left: 7px;
    position: relative;
}

.f-input {
    margin-top: 6px;
    height: 30px;
}

.f-select.second {
    margin-top: 15px;
    height: 30px;
}

.sel-chev {
    position: absolute;
    right: 6px;
    top: 10px;
    width: 11px;
    height: 8px;
}

.f-radios {
    margin-top: 18px;
    height: 20px;
    display: flex;
    align-items: center;
    color: #a19f9d;
    font-size: 14px;
}

.radio {
    width: 16px;
    height: 16px;
    border: 1px solid #a19f9d;
    border-radius: 50%;
    flex: none;
    margin-left: 2px;
}

.radio.on {
    background: #a19f9d;
    box-shadow: inset 0 0 0 2px #fff;
}

.r-text {
    margin: 0 8px 0 9px;
}

.f-apply {
    margin-top: 12px;
    text-align: right;
    line-height: 20px;
    color: #a19f9d;
    font-size: 14px;
}

.f-card.add {
    height: 56px;
    line-height: 56px;
    padding-left: 18px;
    font-size: 14.200px;
    white-space: nowrap;
}

.f-card.first-add {
    margin-top: 9px;
}

.f-scroll {
    position: absolute;
    left: 243px;
    top: 111px;
    width: 7px;
    height: 630px;
    background: #d8d6d4;
    border-radius: 4px;
}

/* page tabs */
.strip {
    height: 44px;
    background: #f3f2f1;
    display: flex;
    align-items: stretch;
    padding-left: 13px;
}

.view-btn {
    width: 30px;
    border-bottom: 3px solid #117865;
    border-radius: 0;
    margin-bottom: 6px;
    padding: 9px 0 0 2px;
}

.desk {
    width: 24px;
    height: 19px;
}

.phone {
    width: 16px;
    height: 26px;
    margin: 6px 0 0 31px;
}

.page-arrow {
    width: 0;
    height: 0;
    align-self: center;
    border-top: 6px solid transparent;
    border-bottom: 6px solid transparent;
}

.page-arrow.left {
    margin-left: 27px;
    border-right: 6px solid #c8c6c4;
}

.page-arrow.right {
    margin-left: 22px;
    border-left: 6px solid #c8c6c4;
}

.page-tab {
    width: 107px;
    margin-left: 8px;
    background: #fff;
    border-left: 1px solid #a19f9d;
    border-bottom: 5px solid #117865;
    text-align: center;
    line-height: 43px;
    font-size: 14.200px;
    color: #252423;
}

.page-add {
    width: 50px;
    margin-left: 1px;
    background: #117865;
    position: relative;
}

.page-add::before,
.page-add::after {
    content: "";
    position: absolute;
    background: #fff;
}

.page-add::before {
    left: 18px;
    top: 20px;
    width: 14px;
    height: 4px;
}

.page-add::after {
    left: 23px;
    top: 15px;
    width: 4px;
    height: 14px;
}

/* visualizations pane */
.viz {
    width: 226px;
    flex: none;
    background: #f3f2f1;
    border-right: 1px solid #e1dfdd;
    border-left: 1px solid #d2d0ce;
    margin-left: 0;
}

.pane-title {
    font-size: 18.300px;
    font-weight: 600;
    color: #252423;
    padding-bottom: 3px;
}

.viz-sub {
    font-size: 13.500px;
    line-height: 16px;
    font-weight: 600;
    padding-left: 10px;
    color: #323130;
}

.viz-tabs {
    margin-top: 6px;
    height: 55px;
    border-bottom: 1px solid #a19f9d;
    position: relative;
    padding-left: 10px;
}

.viz-tab {
    width: 40px;
    height: 40px;
    background: #d2d0ce;
    border-radius: 2px;
    padding: 5px;
}

.viz-tabs::after {
    content: "";
    position: absolute;
    left: 24px;
    bottom: -6px;
    width: 11px;
    height: 11px;
    background: #f3f2f1;
    border-left: 1px solid #a19f9d;
    border-top: 1px solid #a19f9d;
    transform: rotate(45deg);
}

.vt-ic {
    width: 30px;
    height: 30px;
}

.brush {
    position: absolute;
    left: 99px;
    top: 5px;
}

.lens {
    position: absolute;
    left: 179px;
    top: 5px;
    overflow: visible;
}

.viz-grid {
    display: grid;
    grid-template-columns: repeat(6, 35px);
    grid-auto-rows: 35px;
    justify-items: center;
    align-items: center;
    margin: 9px 0 0 7px;
}

.vi {
    width: 23px;
    height: 23px;
    overflow: visible;
}

.vi-sel {
    width: 30px;
    height: 30px;
    border: 1px solid #252423;
    display: flex;
    align-items: center;
    justify-content: center;
}

.vi-text {
    font-family: "Open Sans", sans-serif;
    font-weight: 700;
    color: #1f78c1;
    line-height: 23px;
}

.vi-text.r {
    font-size: 20px;
}

.vi-text.py {
    font-size: 21px;
    letter-spacing: -1px;
}

.vi-more {
    width: 19px;
    height: 5px;
    justify-self: center;
    margin-top: -2px;
}

.wells {
    border-top: 1px solid #e1dfdd;
    margin-top: 6px;
    padding: 10px 7px 0 5px;
}

.well-title {
    padding-left: 9px;
    font-size: 14px;
    line-height: 20px;
}

.well-title b {
    font-weight: 600;
    color: #484644;
}

.well-title.t2 {
    margin-top: 14px;
}

.well-title.t3 {
    margin-top: 13px;
}

.drop {
    margin-top: 7px;
    border: 1px dashed #c8c6c4;
    background: #fff;
    font-size: 14px;
    white-space: nowrap;
    width: 212px;
}

.drop.d1 {
    height: 43px;
    margin-top: 7px;
    padding: 3px;
}

.drop.d2 {
    height: 34px;
    line-height: 32px;
    padding-left: 12px;
}

.drop.d3 {
    height: 32px;
    line-height: 31px;
    margin-top: 13px;
    padding-left: 9px;
}

.pill {
    height: 27px;
    background: #edebe9;
    border: 1px solid #c8c6c4;
    display: flex;
    align-items: center;
    padding-left: 4px;
}

.pill span {
    flex: 1;
}

.pill-chev {
    width: 14px;
    height: 10px;
}

.pill-x {
    width: 11px;
    height: 11px;
    margin: 0 4px 0 7px;
}

.opt {
    display: flex;
    justify-content: space-between;
    align-items: flex-start;
    padding: 0 20px 0 9px;
    font-size: 14px;
    line-height: 20px;
}

.opt span:first-child {
    width: 130px;
}

.o1 {
    margin-top: 13px;
}

.o2 {
    margin-top: 12px;
}

.toggle {
    width: 40px;
    height: 20px;
    border: 1px solid #605e5c;
    border-radius: 10px;
    background: #fff;
    position: relative;
    flex: none;
}

.toggle::after {
    content: "";
    position: absolute;
    left: 5px;
    top: 4px;
    width: 10px;
    height: 10px;
    background: #605e5c;
    border-radius: 50%;
}

.toggle.on {
    background: #117865;
    border-color: #117865;
}

.toggle.on::after {
    left: 24px;
    background: #fff;
}

.tg-check {
    position: absolute;
    left: 6px;
    top: 4px;
    width: 12px;
    height: 10px;
}

/* data pane */
.data {
    flex: 1;
    background: #f3f2f1;
}

.d-search {
    margin: 8px 6px 0 6px;
    height: 28px;
    background: #fff;
    border: 1px solid #e1dfdd;
    border-bottom: 1px solid #8a8886;
    border-radius: 4px;
    display: flex;
    align-items: center;
    padding: 2px 0 0 14px;
    font-size: 15.500px;
    color: #605e5c;
}

.d-lens {
    width: 18px;
    height: 18px;
    margin-right: 9px;
}

.tree {
    list-style: none;
    margin: 12px 0 0;
    padding: 0;
}

.node,
.leaf {
    height: 30px;
    display: flex;
    align-items: center;
    font-size: 14px;
    color: #484644;
    white-space: nowrap;
}

.node {
    padding-left: 16px;
}

.node .n-ic {
    margin: 0 6px 0 6px;
}

.leaf {
    padding-left: 33px;
}

.arrow {
    width: 15px;
    height: 14px;
    padding: 0;
}

.arrow.open {
    height: 11px;
}

.arrow-gap {
    width: 15px;
    flex: none;
}

.n-ic {
    width: 15px;
    height: 15px;
}

.n-wrap {
    position: relative;
}

.badge {
    position: absolute;
    left: 14px;
    top: 8px;
    width: 15px;
    height: 15px;
    border-radius: 50%;
    background: #117865;
    padding: 4px 3px;
}

.chk {
    width: 15px;
    height: 15px;
    margin-left: 7px;
    border: 1px solid #a19f9d;
    border-radius: 2px;
    background: #fff;
    flex: none;
    padding: 2px 1px;
}

.chk.on {
    background: #117865;
    border-color: #117865;
}

.l-ic {
    width: 16px;
    height: 16px;
    margin: 0 7px 0 10px;
    flex: none;
}

/* status bar */
.status {
    height: 30px;
    background: #f3f2f1;
    border-top: 1px solid #e1dfdd;
    border-bottom: 1px solid #000;
    display: flex;
    justify-content: space-between;
    align-items: center;
    padding-left: 5px;
    position: relative;
    z-index: 1;
    font-size: 13.500px;
    color: #605e5c;
}

.zoom {
    display: flex;
    align-items: center;
    padding-right: 23px;
}

.z-minus {
    width: 6px;
    height: 2px;
    background: #605e5c;
}

.z-track {
    width: 124px;
    height: 1px;
    background: #605e5c;
    margin-left: 3px;
    position: relative;
}

.z-thumb {
    position: absolute;
    left: 41px;
    top: -7px;
    width: 5px;
    height: 15px;
    background: #605e5c;
}

.z-tick {
    position: absolute;
    left: 62px;
    top: -3px;
    width: 1px;
    height: 7px;
    background: #605e5c;
}

.z-plus {
    width: 10px;
    height: 10px;
    margin-left: 8px;
    background:
        linear-gradient(#605e5c, #605e5c) center / 10px 2px no-repeat,
        linear-gradient(#605e5c, #605e5c) center / 2px 10px no-repeat;
}

.z-val {
    margin-left: 16px;
    color: #8a8886;
}

.z-fit {
    width: 20px;
    height: 16px;
    margin-left: 24px;
}

/* windows taskbar */
.taskbar {
    height: 50px;
    background: linear-gradient(90deg, #203540, #1f3340 50%, #1b2a43);
    display: flex;
    align-items: center;
    color: #fff;
    position: relative;
}

.start {
    width: 20px;
    height: 20px;
    margin: 0 20px;
}

.task-search {
    width: 360px;
    height: 49px;
    background: #f1f1f1;
    border-bottom: 1px solid #bdbdbd;
    align-self: flex-end;
    display: flex;
    align-items: center;
    padding-left: 15px;
    color: #1b1b1b;
    font-size: 17.500px;
    position: relative;
}

.ts-lens {
    width: 20px;
    height: 20px;
    margin-right: 15px;
}

.ts-art {
    position: absolute;
    right: 0;
    bottom: 0;
    width: 98px;
    height: 49px;
}

.task-view {
    width: 20px;
    height: 22px;
    margin: 0 23px 0 20px;
}

.task-item {
    width: 62px;
    height: 50px;
    display: flex;
    align-items: center;
    justify-content: center;
    position: relative;
    flex: none;
}

.task-item.run::after {
    content: "";
    position: absolute;
    left: 5px;
    right: 6px;
    bottom: 0;
    height: 3px;
    background: #76b9ed;
}

.task-item.active {
    background: #4a5a63;
}

.task-item.active::after {
    left: 0;
    right: 0;
}

.ti {
    width: 30px;
    height: 30px;
}

.xbox {
    width: 30px;
    height: 30px;
    border-radius: 3px;
    background: #107c10;
    margin-left: 2px;
}

.x-count {
    position: absolute;
    left: 38px;
    top: 25px;
    width: 20px;
    height: 20px;
    border-radius: 50%;
    background: #2d4a33;
    border: 1px solid #8a8a8a;
    text-align: center;
    font-size: 13px;
    line-height: 18px;
}

.tray {
    position: absolute;
    left: 1416px;
    top: 0;
    right: 0;
    height: 50px;
    display: flex;
    align-items: center;
}

.weather {
    width: 30px;
    height: 30px;
    position: relative;
    flex: none;
}

.cloud {
    width: 31px;
    height: 25px;
    position: absolute;
    top: 8px;
}

.w-badge {
    position: absolute;
    left: 15px;
    top: -2px;
    width: 15px;
    height: 15px;
    border-radius: 50%;
    background: #d32a22;
    font-size: 10px;
    line-height: 15px;
    text-align: center;
}

.w-temp {
    margin-left: 10px;
    font-size: 16.500px;
    width: 48px;
}

.w-desc {
    font-size: 16.500px;
    width: 100px;
}

.tr-chev {
    width: 16px;
    height: 10px;
}

.tr-wifi {
    width: 16px;
    height: 18px;
    margin-left: 15px;
}

.tr-batt {
    width: 20px;
    height: 13px;
    margin-left: 12px;
}

.tr-vol {
    width: 20px;
    height: 18px;
    margin-left: 10px;
}

.lang,
.clock {
    display: flex;
    flex-direction: column;
    align-items: center;
    font-size: 13.500px;
    line-height: 22px;
}

.lang {
    width: 34px;
    margin-left: 11px;
}

.clock {
    width: 80px;
    margin-left: 12px;
}

.notif {
    width: 20px;
    height: 22px;
    margin-left: 21px;
}
```
